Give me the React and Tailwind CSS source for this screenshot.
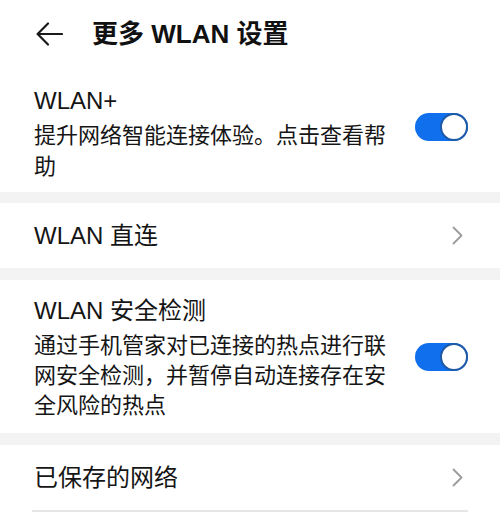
import React, { useState } from "react";

const FONT = {
  fontFamily: '"Liberation Sans", "Noto Sans CJK SC", sans-serif',
};

const BackArrow = () => (
  <svg width="27" height="24" viewBox="0 0 27 24" fill="none">
    <path d="M26 12H2" stroke="#1a1a1a" strokeWidth="2.2" strokeLinecap="round" />
    <path d="M12 1.5L1.6 12L12 22.5" stroke="#1a1a1a" strokeWidth="2.2" strokeLinecap="round" strokeLinejoin="round" />
  </svg>
);

const Chevron = () => (
  <svg width="11" height="19" viewBox="0 0 11 19" fill="none">
    <path d="M1.5 1.5L9.5 9.5L1.5 17.5" stroke="#9b9b9b" strokeWidth="1.8" strokeLinecap="round" strokeLinejoin="round" />
  </svg>
);

const Toggle = ({ on, onClick }) => (
  <button
    type="button"
    onClick={onClick}
    className={`flex h-[28px] w-[53px] items-center rounded-full ${on ? "justify-end bg-[#0f6fec]" : "justify-start bg-[#cfcfcf]"}`}
  >
    <span className="h-[28px] w-[28px] rounded-full border-[2.5px] border-[#1f5aa6] bg-white" />
  </button>
);

const Band = ({ h }) => <div className={`w-full bg-[#f3f3f3] ${h}`} />;

export default function App() {
  const [wlanPlus, setWlanPlus] = useState(true);
  const [security, setSecurity] = useState(true);

  return (
    <div className="h-[517px] w-[500px] overflow-hidden bg-white text-[#151515]" style={FONT}>
      {/* Header */}
      <div className="flex h-[68px] items-center pl-[36px]">
        <BackArrow />
        <h1 className="ml-[29px] text-[26px] font-bold leading-[30px] text-[#111]">
          更多 WLAN 设置
        </h1>
      </div>

      {/* WLAN+ */}
      <div className="flex h-[124px] items-center justify-between pl-[34px] pr-[32px]">
        <div className="w-[362px] pt-[8px]">
          <div className="text-[24px] leading-[30px]">WLAN+</div>
          <p className="mt-[4px] text-[22px] leading-[31px]">
            提升网络智能连接体验。点击查看帮助
          </p>
        </div>
        <div className="-mt-[6px]">
          <Toggle on={wlanPlus} onClick={() => setWlanPlus(!wlanPlus)} />
        </div>
      </div>

      <Band h="h-[11px]" />

      {/* WLAN 直连 */}
      <div className="flex h-[65px] items-center justify-between pl-[34px] pr-[37px]">
        <span className="text-[24px] leading-[30px]">WLAN 直连</span>
        <Chevron />
      </div>

      <Band h="h-[12px]" />

      {/* WLAN 安全检测 */}
      <div className="flex h-[153px] items-center justify-between pl-[34px] pr-[32px]">
        <div className="w-[362px] pt-[4px]">
          <div className="text-[24px] leading-[30px]">WLAN 安全检测</div>
          <p className="mt-[5px] text-[22px] leading-[30px]">
            通过手机管家对已连接的热点进行联网安全检测，并暂停自动连接存在安全风险的热点
          </p>
        </div>
        <div className="mt-[1px]">
          <Toggle on={security} onClick={() => setSecurity(!security)} />
        </div>
      </div>

      <Band h="h-[12px]" />

      {/* 已保存的网络 */}
      <div className="mx-[32px] flex h-[67px] items-center justify-between border-b-2 border-[#e6e6e6] pl-[2px] pr-[5px]">
        <span className="text-[24px] leading-[30px]">已保存的网络</span>
        <Chevron />
      </div>
    </div>
  );
}
